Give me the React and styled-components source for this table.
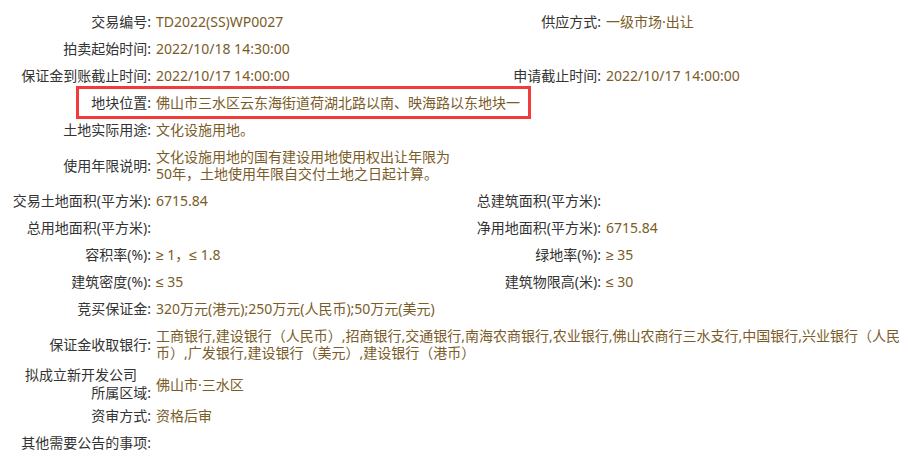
import React from 'react';
import styled, {createGlobalStyle} from 'styled-components';

const GlobalStyle = createGlobalStyle`
  html, body {
    margin: 0;
    padding: 0;
    background: #fff;
  }
  body {
    font-family: "Noto Sans", "Liberation Sans", "Noto Sans CJK SC", sans-serif;
    font-size: 14px;
  }
`

const Sheet = styled.div`
  width: 907px;
  padding: 8px 0 10px 0;
`
const Row = styled.div`
  position: relative;
  display: grid;
  grid-template-columns: 151px 300px 140px 1fr;
  column-gap: 5px;
  min-height: 27px;
  align-items: center;
`
const Label = styled.div`
  text-align: right;
  color: #333;
  line-height: ${p => p.$tight ? '18px' : '17px'};
  padding: ${p => p.$tight ? '0' : '5px 0'};
  white-space: nowrap;
`
const LabelLine = styled.span`
  display: block;
  padding-right: ${p => p.$indent || 0}px;
`
const Value = styled.div`
  color: #7a5c28;
  line-height: 17px;
  padding: 5px 0;
  grid-column: ${p => p.$wide ? '2 / 5' : 'auto'};
`
const Highlight = styled.div`
  position: absolute;
  left: 76px;
  width: 455px;
  top: -3px;
  bottom: -3px;
  border: 3px solid #f03c3c;
  box-sizing: border-box;
  pointer-events: none;
`

const pairs = [
    ['交易编号:', 'TD2022(SS)WP0027', '供应方式:', '一级市场·出让'],
    ['拍卖起始时间:', '2022/10/18 14:30:00', '', ''],
    ['保证金到账截止时间:', '2022/10/17 14:00:00', '申请截止时间:', '2022/10/17 14:00:00'],
];
const areas = [
    ['交易土地面积(平方米):', '6715.84', '总建筑面积(平方米):', ''],
    ['总用地面积(平方米):', '', '净用地面积(平方米):', '6715.84'],
    ['容积率(%):', '≥ 1，≤ 1.8', '绿地率(%):', '≥ 35'],
    ['建筑密度(%):', '≤ 35', '建筑物限高(米):', '≤ 30'],
];

const PairRow = ({row}) => (
    <Row>
        <Label>{row[0]}</Label>
        <Value>{row[1]}</Value>
        <Label>{row[2]}</Label>
        <Value>{row[3]}</Value>
    </Row>
);

const App = () => {
    return (
        <Sheet>
            <GlobalStyle/>
            {pairs.map(r => <PairRow key={r[0]} row={r}/>)}
            <Row>
                <Highlight/>
                <Label>地块位置:</Label>
                <Value $wide>佛山市三水区云东海街道荷湖北路以南、映海路以东地块一</Value>
            </Row>
            <Row>
                <Label>土地实际用途:</Label>
                <Value $wide>文化设施用地。</Value>
            </Row>
            <Row>
                <Label>使用年限说明:</Label>
                <Value>文化设施用地的国有建设用地使用权出让年限为50年，土地使用年限自交付土地之日起计算。</Value>
            </Row>
            {areas.map(r => <PairRow key={r[0]} row={r}/>)}
            <Row>
                <Label>竞买保证金:</Label>
                <Value $wide>320万元(港元);250万元(人民币);50万元(美元)</Value>
            </Row>
            <Row>
                <Label>保证金收取银行:</Label>
                <Value $wide>工商银行,建设银行（人民币）,招商银行,交通银行,南海农商银行,农业银行,佛山农商行三水支行,中国银行,兴业银行（人民币）,广发银行,建设银行（美元）,建设银行（港币）</Value>
            </Row>
            <Row>
                <Label $tight>
                    <LabelLine $indent={14}>拟成立新开发公司</LabelLine>
                    <LabelLine>所属区域:</LabelLine>
                </Label>
                <Value $wide>佛山市·三水区</Value>
            </Row>
            <Row>
                <Label>资审方式:</Label>
                <Value $wide>资格后审</Value>
            </Row>
            <Row>
                <Label>其他需要公告的事项:</Label>
                <Value $wide></Value>
            </Row>
        </Sheet>
    );
};
export default App;
